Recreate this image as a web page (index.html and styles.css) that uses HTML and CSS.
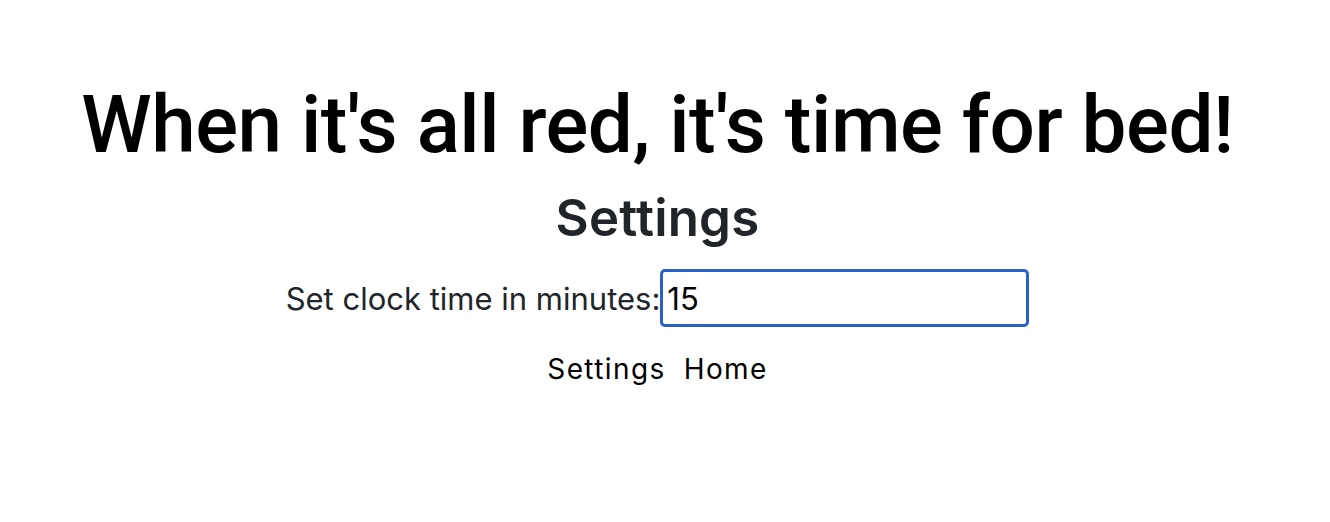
FILE: index.html
```html
<!DOCTYPE html>
<html>
<head>
<meta charset="utf-8">
<link rel="stylesheet" href="styles.css">
</head>
<body>
<main class="app">
  <h1 class="title">When it's all red, it's time for bed!</h1>
  <h2 class="subtitle">Settings</h2>
  <div class="field">
    <label class="field-label" for="mins">Set clock time in minutes:</label>
    <input class="field-input" id="mins" type="text" value="15">
  </div>
  <nav class="nav">
    <a class="nav-link">Settings</a>
    <a class="nav-link">Home</a>
  </nav>
</main>
</body>
</html>
```
FILE: styles.css
```css
html, body {
  margin: 0;
  padding: 0;
  background: #fff;
}
body {
  font-family: Inter, "Noto Sans", sans-serif;
  color: #212529;
}
.app {
  display: flex;
  flex-direction: column;
  align-items: center;
  padding-top: 77px;
  padding-right: 15px;
}
.title {
  margin: 0;
  font-family: Roboto, Inter, sans-serif;
  font-size: 80px;
  font-weight: 500;
  line-height: 96px;
  color: #000;
  letter-spacing: -0.5px;
}
.subtitle {
  margin: 16px 0 0;
  font-size: 51px;
  font-weight: 600;
  line-height: 58px;
  letter-spacing: 0.2px;
  color: #212529;
}
.field {
  display: flex;
  align-items: center;
  margin-top: 22px;
}
.field-label {
  font-size: 31px;
  color: #212529;
}
.field-input {
  box-sizing: border-box;
  width: 369px;
  height: 58px;
  margin: 0;
  border: 3px solid #2a61c8;
  border-radius: 5px;
  outline: none;
  padding: 0 4px;
  font-family: Inter, "Noto Sans", sans-serif;
  font-size: 31px;
  color: #000;
}
.nav {
  display: flex;
  gap: 18px;
  margin-top: 25px;
}
.nav-link {
  font-size: 28px;
  letter-spacing: 1.4px;
  color: #000;
}
```
